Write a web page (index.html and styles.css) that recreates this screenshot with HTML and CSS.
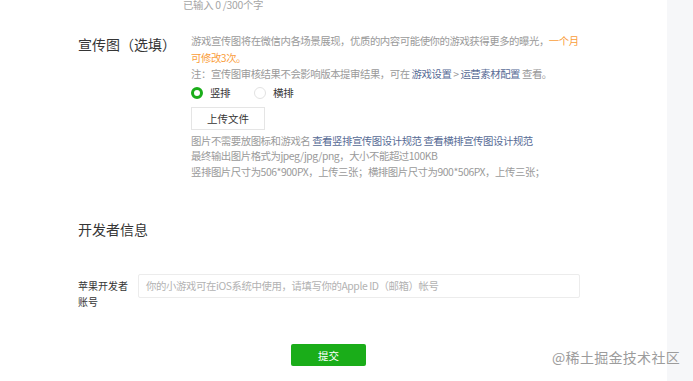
FILE: index.html
```html
<!DOCTYPE html>
<html lang="zh">
<head>
<meta charset="utf-8">
<link rel="stylesheet" href="styles.css">
</head>
<body>
<div class="page">
  <div class="main">
    <div class="counter">已输入 0 /300个字</div>

    <div class="row promo">
      <div class="label big">宣传图（选填）</div>
      <div class="field">
        <p class="desc">游戏宣传图将在微信内各场景展现，优质的内容可能使你的游戏获得更多的曝光，<span class="warn">一个月可修改3次。</span></p>
        <p class="desc">注：宣传图审核结果不会影响版本提审结果，可在 <a class="link">游戏设置</a> &gt; <a class="link">运营素材配置</a> 查看。</p>
        <div class="radios">
          <label class="radio"><span class="dot on"></span>竖排</label>
          <label class="radio"><span class="dot"></span>横排</label>
        </div>
        <button class="upload">上传文件</button>
        <div class="help">
          <p>图片不需要放图标和游戏名 <a class="link">查看竖排宣传图设计规范</a> <a class="link">查看横排宣传图设计规范</a></p>
          <p>最终输出图片格式为jpeg/jpg/png，大小不能超过100KB</p>
          <p>竖排图片尺寸为506*900PX，上传三张；横排图片尺寸为900*506PX，上传三张；</p>
        </div>
      </div>
    </div>

    <h2 class="section-title">开发者信息</h2>

    <div class="row apple">
      <div class="label small">苹果开发者<br>账号</div>
      <div class="input">你的小游戏可在iOS系统中使用，请填写你的Apple ID（邮箱）帐号</div>
    </div>

    <button class="submit">提交</button>
  </div>
  <div class="rail"></div>
  <div class="watermark">@稀土掘金技术社区</div>
</div>
</body>
</html>
```
FILE: styles.css
```css
* { box-sizing: border-box; }
html, body { margin: 0; padding: 0; background: #fff; }
body {
  font-family: "Noto Sans CJK SC", "Noto Sans", sans-serif;
  color: #353535;
  width: 693px;
  height: 381px;
  overflow: hidden;
}
p { margin: 0; }
.page {
  position: relative;
  display: flex;
  height: 381px;
}
.main {
  flex: 1;
  padding-left: 78px;
}
.rail {
  width: 26px;
  background: #f6f7f9;
}
.counter {
  margin-top: -2px;
  margin-left: 105px;
  font-size: 10.4px;
  letter-spacing: -0.3px;
  line-height: 13px;
  color: #a5a5a5;
}
.row {
  display: flex;
  align-items: flex-start;
}
.promo { margin-top: 22px; }
.label.big {
  width: 113px;
  font-size: 14px;
  line-height: 20px;
  margin-top: 1px;
  color: #353535;
}
.field {
  width: 388px;
  font-size: 10.4px;
  letter-spacing: -0.45px;
  color: #9a9a9a;
}
.desc {
  line-height: 16.5px;
}
.warn { color: #fa9d3b; }
.link { color: #576b95; text-decoration: none; }
.radios {
  display: flex;
  gap: 24px;
  margin-top: 1px;
  height: 18px;
  align-items: center;
}
.radio {
  display: flex;
  align-items: center;
  gap: 7px;
  color: #353535;
  font-size: 10.5px;
}
.dot {
  width: 12px;
  height: 12px;
  border-radius: 50%;
  border: 1px solid #e2e2e2;
  background: #fff;
}
.dot.on { border: 3.5px solid #1aad19; }
.upload {
  display: block;
  margin-top: 5px;
  width: 74px;
  height: 23px;
  padding: 0;
  border: 1px solid #e5e5e5;
  background: #fff;
  font-family: inherit;
  font-size: 10.5px;
  color: #353535;
}
.help {
  margin-top: 3px;
  line-height: 15.5px;
  white-space: nowrap;
}
.section-title {
  margin: 40px 0 0;
  font-size: 14px;
  font-weight: normal;
  line-height: 20px;
  color: #353535;
}
.apple { margin-top: 35px; }
.label.small {
  width: 60px;
  font-size: 10px;
  line-height: 16px;
  margin-top: 4px;
  color: #353535;
}
.input {
  width: 442px;
  height: 24px;
  border: 1px solid #ececec;
  border-radius: 2px;
  padding-left: 7px;
  font-size: 10.4px;
  letter-spacing: -0.4px;
  line-height: 22px;
  color: #b2b2b2;
}
.submit {
  display: block;
  margin: 34px 0 0 213px;
  width: 75px;
  height: 22px;
  padding: 0;
  border: none;
  border-radius: 2px;
  background: #1aad19;
  color: #fff;
  font-family: inherit;
  font-size: 10.5px;
}
.watermark {
  position: absolute;
  right: 13px;
  top: 348px;
  font-size: 14px;
  line-height: 18px;
  color: #9c9c9c;
  letter-spacing: 0.3px;
}
```
